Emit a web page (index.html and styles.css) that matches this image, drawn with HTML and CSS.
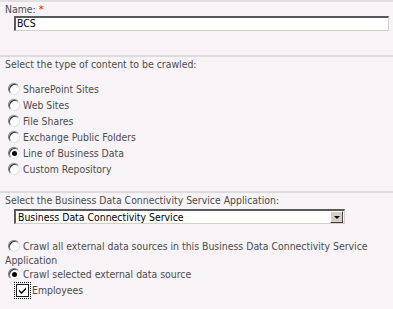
FILE: index.html
```html
<!DOCTYPE html>
<html lang="en">
<head>
    <meta charset="UTF-8">
    <title>Crawl content source</title>
    <link rel="stylesheet" href="styles.css">
</head>
<body>
    <div class="section name-section">
        <div class="label">Name: <span class="req">*</span></div>
        <div class="textbox">BCS</div>
    </div>

    <div class="section">
        <div class="label">Select the type of content to be crawled:</div>
        <ul class="options">
            <li><span class="radio"></span>SharePoint Sites</li>
            <li><span class="radio"></span>Web Sites</li>
            <li><span class="radio"></span>File Shares</li>
            <li><span class="radio"></span>Exchange Public Folders</li>
            <li><span class="radio checked"></span>Line of Business Data</li>
            <li><span class="radio"></span>Custom Repository</li>
        </ul>
    </div>

    <div class="section last">
        <div class="label">Select the Business Data Connectivity Service Application:</div>
        <div class="dropdown">
            <span class="dropdown-text">Business Data Connectivity Service</span>
            <span class="dropdown-btn"><span class="arrow"></span></span>
        </div>

        <p class="crawl-option first"><span class="radio"></span>Crawl all external data sources in this Business Data Connectivity Service Application</p>
        <p class="crawl-option"><span class="radio checked"></span>Crawl selected external data source</p>
        <div class="check-row">
            <span class="focus"><span class="checkbox">
                <svg width="9" height="9" viewBox="0 0 9 9"><path d="M1 3.5 L3.5 6 L8 1.5 L8 3.5 L3.5 8 L1 5.5 Z" fill="#000"/></svg>
            </span></span>Employees
        </div>
    </div>
</body>
</html>
```

FILE: styles.css
```css
* {
    margin: 0;
    padding: 0;
    box-sizing: border-box;
}

body {
    background: #f7f3f6;
    font-family: "DejaVu Sans Condensed", "DejaVu Sans", sans-serif;
    font-size: 10.4px;
    color: #4c4c4c;
    border-top: 2px solid #e2dfe1;
}

.section {
    padding: 1px 5px 0;
    border-bottom: 2px solid #dcdadc;
}

.section.last {
    border-bottom: none;
}

.label {
    line-height: 13px;
}

.req {
    color: #e00;
}

/* name field */
.name-section {
    padding-bottom: 24px;
}

.textbox {
    margin: 0 0 0 9px;
    width: 375px;
    height: 15px;
    background: #fff;
    color: #000;
    border-style: solid;
    border-width: 2px 1px 1px 2px;
    border-color: #5a5a5a #d4d0c8 #d4d0c8 #5a5a5a;
    line-height: 11px;
    padding-left: 1px;
}

/* radio list */
.options {
    list-style: none;
    margin-top: 10px;
    padding-left: 3px;
    padding-bottom: 14px;
}

.options li {
    height: 16px;
    line-height: 16px;
    display: flex;
    align-items: center;
}

.radio {
    display: inline-block;
    width: 12px;
    height: 12px;
    border-radius: 50%;
    background: #fff;
    border: 1px solid;
    border-color: #7a7a7a #e4e4e4 #e4e4e4 #7a7a7a;
    box-shadow: inset 1px 1px 0 #404040;
    margin-right: 3px;
    position: relative;
    flex-shrink: 0;
    vertical-align: -2px;
}

.radio.checked::after {
    content: "";
    position: absolute;
    left: 3px;
    top: 3px;
    width: 5px;
    height: 5px;
    border-radius: 50%;
    background: #000;
}

/* bdc section */
.dropdown {
    margin: 2px 0 0 9px;
    width: 331px;
    height: 15px;
    background: #fff;
    color: #000;
    border-style: solid;
    border-width: 2px 1px 1px 2px;
    border-color: #5a5a5a #d4d0c8 #d4d0c8 #5a5a5a;
    display: flex;
    align-items: center;
    justify-content: space-between;
}

.dropdown-text {
    padding-left: 2px;
    line-height: 11px;
}

.dropdown-btn {
    width: 13px;
    height: 12px;
    background: #d4d0c8;
    border: 1px solid;
    border-color: #fff #404040 #404040 #fff;
    display: flex;
    align-items: center;
    justify-content: center;
    margin-right: 1px;
}

.arrow {
    width: 0;
    height: 0;
    border-left: 3px solid transparent;
    border-right: 3px solid transparent;
    border-top: 3px solid #000;
}

.crawl-option {
    line-height: 14px;
}

.crawl-option .radio {
    margin-left: 3px;
}

.crawl-option.first {
    margin-top: 15px;
}

.check-row {
    display: flex;
    align-items: center;
    margin-top: 0;
    padding-left: 9px;
    height: 18px;
}

.focus {
    border: 1px dotted #000;
    padding: 1px;
    margin-right: 1px;
}

.checkbox {
    display: block;
    width: 13px;
    height: 13px;
    background: #fff;
    border: 1px solid #1c1c1c;
    padding: 1px;
}

.checkbox svg {
    display: block;
}
```
